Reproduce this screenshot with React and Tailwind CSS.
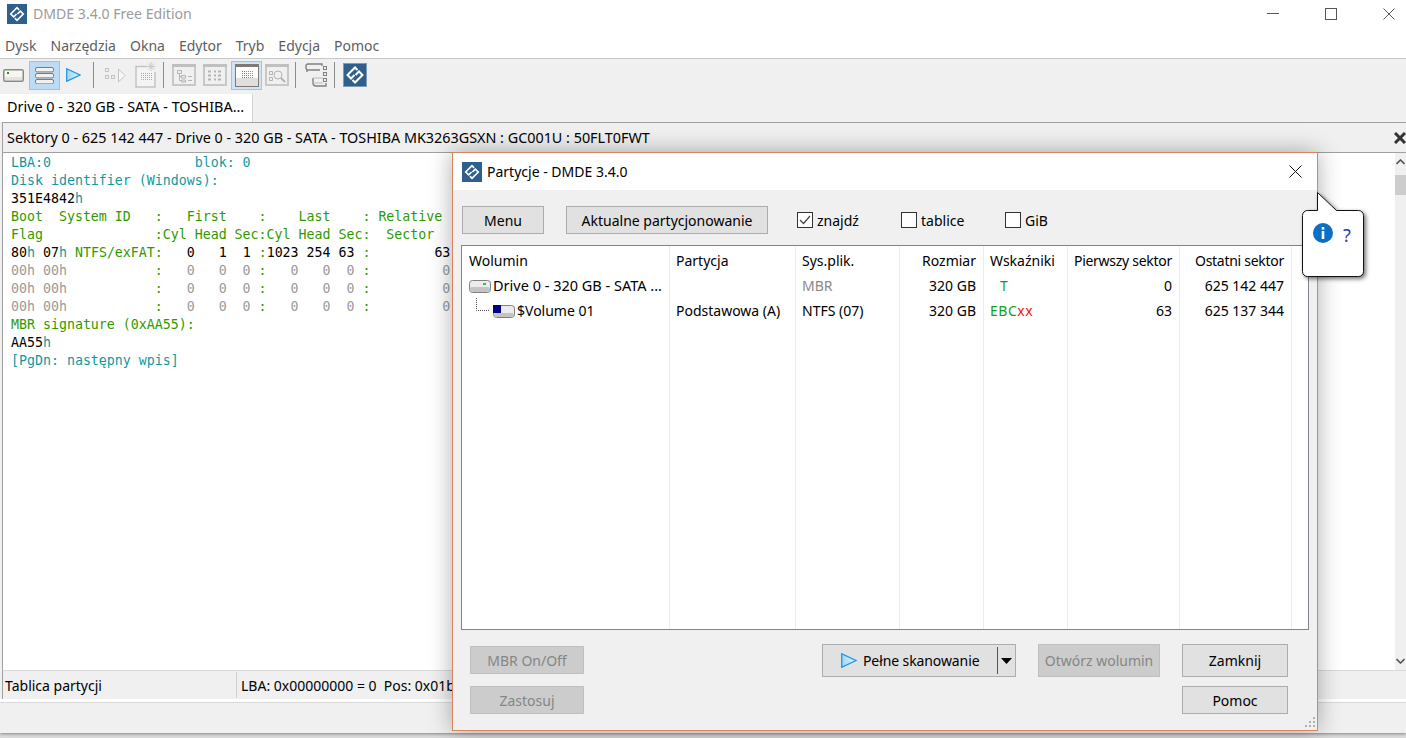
import React from "react";

const ui = "font-['Noto_Sans',sans-serif]";

function Logo({ size = 20, framed }) {
  return (
    <svg width={size} height={size} viewBox="0 0 24 24" className="shrink-0">
      <rect width="24" height="24" fill={framed ? "#7f9ab5" : "#2f5f8c"} />
      <rect x="1" y="1" width="22" height="22" fill="#2f5f8c" />
      <path d="M14.5 7 L12 4.5 L4.5 12 L8 15.5 L11.5 12" fill="none" stroke="#fff" strokeWidth="2" />
      <path d="M9.5 17 L12 19.5 L19.5 12 L16 8.5 L12.5 12" fill="none" stroke="#fff" strokeWidth="2" />
    </svg>
  );
}

function DriveIcon({ className = "" }) {
  return (
    <svg width="22" height="13" viewBox="0 0 22 13" className={className}>
      <rect x="0.5" y="0.5" width="21" height="12" rx="3" fill="#ececec" stroke="#808080" />
      <rect x="1" y="7" width="20" height="5" rx="2" fill="#c4c4c4" />
      <rect x="14" y="3" width="3" height="2" fill="#35c235" />
    </svg>
  );
}

function VolumeIcon() {
  return (
    <svg width="22" height="13" viewBox="0 0 22 13">
      <rect x="0.5" y="0.5" width="21" height="12" rx="3" fill="#ececec" stroke="#808080" />
      <rect x="1" y="8" width="20" height="4" rx="2" fill="#c4c4c4" />
      <rect x="0" y="0" width="8" height="8" fill="#000080" />
    </svg>
  );
}

function PlayIcon({ w = 15, h = 14 }) {
  return (
    <svg width={w} height={h} viewBox="0 0 15 14" className="shrink-0">
      <defs>
        <linearGradient id="playFill" x1="0" y1="0" x2="1" y2="0">
          <stop offset="0" stopColor="#9fd4f7" />
          <stop offset="1" stopColor="#e3f3fd" />
        </linearGradient>
      </defs>
      <path d="M0.7 0.7 L14 7 L0.7 13.3 Z" fill="url(#playFill)" stroke="#1a94e6" strokeWidth="1.2" />
    </svg>
  );
}

function Sep({ className = "" }) {
  return <div className={`w-px h-[26px] bg-[#8c8c8c] shrink-0 ${className}`} />;
}

function PaneIcon({ children }) {
  return (
    <svg width="24" height="22" viewBox="0 0 24 22">
      <rect x="1" y="1" width="22" height="20" fill="#f0f0f0" stroke="#c8c8c8" strokeWidth="2" />
      <rect x="0" y="0" width="24" height="3" fill="#c0c0c0" />
      {children}
    </svg>
  );
}

const gridDots = [];
for (let r = 0; r < 4; r++) for (let c = 0; c < 6; c++) gridDots.push([6 + c * 2, 6 + r * 2]);

function Toolbar() {
  return (
    <div className="h-[35px] bg-[#f0f0f0] flex items-center pl-[3px] pb-[3px] shrink-0">
      <svg width="21" height="13" viewBox="0 0 21 13">
        <rect x="0.75" y="0.75" width="19.5" height="11.5" rx="1.5" fill="#f8f6f2" stroke="#8a8a84" strokeWidth="1.5" />
        <rect x="2" y="8" width="17" height="3" fill="#e6e1da" />
        <rect x="4" y="3" width="2" height="2" fill="#1a9a1a" />
      </svg>
      <div className="ml-[5px] w-[31px] h-[29px] bg-[#bcdcf5] border border-[#90c8f3] flex items-center justify-center">
        <svg width="19" height="17" viewBox="0 0 19 17">
          {[0, 6, 12].map((y) => (
            <rect key={y} x="0.5" y={y + 0.5} width="18" height="4.4" rx="1.5" fill="#f4f1ec" stroke="#807a74" />
          ))}
        </svg>
      </div>
      <div className="ml-[6px]"><PlayIcon /></div>
      <Sep className="ml-[12px]" />
      <svg width="22" height="16" viewBox="0 0 22 16" className="ml-[10px]" fill="none" stroke="#c4c4c4">
        <rect x="1.5" y="1.5" width="3" height="3" />
        <rect x="1.5" y="8.5" width="3" height="3" />
        <rect x="7.5" y="8.5" width="3" height="3" />
        <path d="M14.5 2 L21 8.5 L14.5 15 Z" fill="#f7f7f7" />
      </svg>
      <svg width="23" height="26" viewBox="0 0 23 26" className="ml-[9px]">
        <path d="M12 4.5 H1 V25 H20 V10" fill="#f4f4f4" stroke="#c4c4c4" strokeWidth="1.5" />
        {gridDots.map(([x, y]) => <rect key={`${x}-${y}`} x={x} y={y + 5} width="1" height="1" fill="#aaa" />)}
        <path d="M16 0 v9 M11.5 4.5 h9 M13 1.5 l6 6 M19 1.5 l-6 6" stroke="#c8c8c8" />
      </svg>
      <Sep className="ml-[5px]" />
      <div className="ml-[8px]">
        <PaneIcon>
          <path d="M5.5 6.5 h4 v3 h-4 Z M9.5 11.5 h4 v2.5 h-4 Z M9.5 16 h4 v2 h-4 Z M7.5 9.5 v7 h2 M7.5 12.5 h2 M16 12.5 h4 M16 16.5 h4" fill="none" stroke="#b4b4b4" />
        </PaneIcon>
      </div>
      <div className="ml-[7px]">
        <PaneIcon>
          <path d="M5 7.5 h3 M5 11.5 h3 M5 15.5 h3 M11 7.5 h2 M15 7.5 h3 M11 11.5 h2 M15 11.5 h3 M11 15.5 h2 M15 15.5 h3" fill="none" stroke="#b4b4b4" strokeWidth="2" />
        </PaneIcon>
      </div>
      <div className="ml-[4px] w-[31px] h-[29px] bg-[#cfe5f7] border border-[#90c8f3] flex items-center justify-center">
        <svg width="24" height="23" viewBox="0 0 24 23">
          <rect x="0.5" y="0.5" width="23" height="22" fill="#fff" stroke="#807a74" />
          <rect width="24" height="3" fill="#807a74" />
          <rect x="1" y="14" width="22" height="8" fill="#e2dede" />
          {gridDots.map(([x, y]) => <rect key={`${x}-${y}`} x={x + 1} y={y + 1} width="1" height="1" fill={x > 10 ? "#8090a8" : "#4a90c0"} />)}
        </svg>
      </div>
      <div className="ml-[3px]">
        <PaneIcon>
          <path d="M4.5 7.5 h3 v3 h-3 Z M4.5 13.5 h3 v3 h-3 Z" fill="none" stroke="#b4b4b4" />
          <circle cx="13" cy="11" r="4" fill="none" stroke="#b4b4b4" />
          <path d="M16 14 L20 18" stroke="#b4b4b4" strokeWidth="2" />
        </PaneIcon>
      </div>
      <Sep className="ml-[6px]" />
      <svg width="23" height="24" viewBox="0 0 23 24" className="ml-[9px]" fill="none" stroke="#808080">
        <path d="M15 7 H3 A2 2 0 0 1 1 5 V3 A2 2 0 0 1 3 1 H17 V3" strokeWidth="1.4" />
        <path d="M2 7 V9 M8 15 V20 A3 3 0 0 0 11 23 H21 V20" strokeWidth="1.4" />
        <path d="M8 15 H18 M8 20 H18" stroke="#bbb" />
        <rect x="18.5" y="3.5" width="3" height="3" />
        <rect x="18.5" y="9.5" width="3" height="3" />
        <rect x="18.5" y="15.5" width="3" height="3" />
      </svg>
      <Sep className="ml-[6px]" />
      <div className="ml-[8px]"><Logo size={24} framed /></div>
    </div>
  );
}

const TEAL = "text-[#0f9a9f]";
const GREEN = "text-[#2f9a00]";
const BLACK = "text-black";
const GRAY = "text-[#9a9a9a]";

const dumpLines = [
  [[TEAL, "LBA:0                  blok: 0"]],
  [[TEAL, "Disk identifier (Windows):"]],
  [[BLACK, "351E4842"], [TEAL, "h"]],
  [[GREEN, "Boot  System ID   :   First    :    Last    : Relative"]],
  [[GREEN, "Flag              :Cyl Head Sec:Cyl Head Sec:  Sector"]],
  [[BLACK, "80"], [TEAL, "h "], [BLACK, "07"], [TEAL, "h "], [GREEN, "NTFS/exFAT:   "], [BLACK, "0   1  1 "], [GREEN, ":"], [BLACK, "1023 254 63 "], [GREEN, ":        "], [BLACK, "63"]],
  ...[0, 1, 2].map(() => [[GRAY, "00h 00h           "], [GREEN, ":   "], [GRAY, "0   0  0 "], [GREEN, ":   "], [GRAY, "0   0  0 "], [GREEN, ":         "], [GRAY, "0"]]),
  [[GREEN, "MBR signature (0xAA55):"]],
  [[BLACK, "AA55"], [TEAL, "h"]],
  [[TEAL, "[PgDn: następny wpis]"]],
];

function HexDump() {
  return (
    <div className="pl-2 pt-px font-['DejaVu_Sans_Mono',monospace] text-[13.28px] leading-[18px] whitespace-pre">
      {dumpLines.map((line, i) => (
        <div key={i} className="h-[18px]">
          {line.map(([color, text], j) => <span key={j} className={color}>{text}</span>)}
        </div>
      ))}
    </div>
  );
}

function Checkbox({ checked, label, className = "" }) {
  return (
    <label className={`flex items-center gap-[4px] ${className}`}>
      <span className="w-4 h-4 border border-[#333] bg-white flex items-center justify-center">
        {checked && (
          <svg width="12" height="10" viewBox="0 0 12 10" fill="none" stroke="#444" strokeWidth="1.2">
            <path d="M1 5 L4.5 8.5 L11 1" />
          </svg>
        )}
      </span>
      {label}
    </label>
  );
}

function Btn({ children, className = "", disabled }) {
  return (
    <div className={`flex items-center justify-center border shrink-0 ${disabled ? "bg-[#cccccc] border-[#bfbfbf] text-[#868686]" : "bg-[#e1e1e1] border-[#adadad] text-black"} ${className}`}>
      {children}
    </div>
  );
}

const columns = [
  { w: "w-[208px]", head: "Wolumin", cells: [], cls: "pl-[7px]" },
  { w: "w-[126px]", head: "Partycja", cells: ["", "Podstawowa (A)"], cls: "pl-[6px]" },
  { w: "w-[104px]", head: "Sys.plik.", cells: [<span key="m" className="text-[#8a8a8a]">MBR</span>, "NTFS (07)"], cls: "pl-[6px]" },
  { w: "w-[84px]", head: "Rozmiar", cells: ["320 GB", "320 GB"], cls: "pr-[7px] justify-end" },
  {
    w: "w-[84px]",
    head: "Wskaźniki",
    cells: [
      <span key="t" className="pl-[10px] text-[#14a014]">T</span>,
      <span key="e" className="tracking-[0.5px]"><span className="text-[#14a014]">EBC</span><span className="text-[#f01010]">xx</span></span>,
    ],
    cls: "pl-[6px]",
  },
  { w: "w-[112px]", head: <span className="tracking-[-0.28px]">Pierwszy sektor</span>, key: "first", cells: ["0", "63"], cls: "pr-[7px] justify-end" },
  { w: "w-[112px]", head: <span className="tracking-[-0.28px]">Ostatni sektor</span>, key: "last", cells: ["625 142 447", "625 137 344"], cls: "pr-[7px] justify-end" },
];

function PartitionList() {
  return (
    <div className="mx-[8px] h-[385px] mt-[11px] border border-[#83838d] bg-white flex shrink-0">
      {columns.map((col, i) => (
        <div key={col.key || col.head} className={`${col.w} h-full border-r border-[#e6edf5] shrink-0`}>
          <div className={`h-[27px] pt-[2px] flex items-center ${col.cls}`}>{col.head}</div>
          {i === 0 ? (
            <>
              <div className="h-[25px] flex items-center pl-[7px] whitespace-nowrap gap-[2px]">
                <DriveIcon className="mt-[1px]" />
                <span className="text-[14.5px]">Drive 0 - 320 GB - SATA ...</span>
              </div>
              <div className="h-[25px] flex items-center pl-[14px] whitespace-nowrap">
                <svg width="17" height="14" viewBox="0 0 17 14" className="-mt-[12px] shrink-0">
                  <path d="M0.5 0 V12.5 H13" fill="none" stroke="#555" strokeDasharray="1 1" />
                </svg>
                <span className="mt-[1px]"><VolumeIcon /></span>
                <span className="ml-[2px]">$Volume 01</span>
              </div>
            </>
          ) : (
            col.cells.map((c, j) => (
              <div key={j} className={`h-[25px] flex items-center whitespace-nowrap ${col.cls}`}>{c}</div>
            ))
          )}
        </div>
      ))}
    </div>
  );
}

function PartitionsDialog() {
  return (
    <div className="absolute left-[452px] top-[152px] w-[866px] h-[579px] border border-[#d9835f] bg-[#f0f0f0] shadow-[0_0_22px_rgba(0,0,0,0.32)] flex flex-col text-[14px] text-black">
      <div className="h-[37px] bg-white flex items-center pl-[9px] pr-[15px] shrink-0">
        <Logo />
        <span className="ml-[5px]">Partycje - DMDE 3.4.0</span>
        <svg width="13" height="13" viewBox="0 0 13 13" className="ml-auto" stroke="#111" fill="none">
          <path d="M0.5 0.5 L12.5 12.5 M12.5 0.5 L0.5 12.5" />
        </svg>
      </div>
      <div className="flex items-center pl-[9px] mt-[16px] shrink-0">
        <Btn className="w-[82px] h-[28px]">Menu</Btn>
        <Btn className="w-[202px] h-[28px] ml-[22px]">Aktualne partycjonowanie</Btn>
        <Checkbox checked label="znajdź" className="ml-[29px] w-[104px]" />
        <Checkbox label="tablice" className="w-[104px]" />
        <Checkbox label="GiB" />
      </div>
      <PartitionList />
      <div className="flex pl-[17px] mt-[14px] relative grow">
        <div className="flex flex-col gap-[12px] pt-[2px] w-[114px]">
          <Btn disabled className="w-[114px] h-[28px]">MBR On/Off</Btn>
          <Btn disabled className="w-[114px] h-[28px]">Zastosuj</Btn>
        </div>
        <Btn className="w-[194px] h-[33px] ml-[238px] !justify-start pl-[18px]">
          <PlayIcon w={16} h={15} />
          <span className="ml-[6px] tracking-[-0.1px]">Pełne skanowanie</span>
          <span className="ml-auto w-px h-[27px] bg-[#555]" />
          <svg width="11" height="6" viewBox="0 0 11 6" className="mx-[3px]"><path d="M0 0 H11 L5.5 6 Z" fill="#000" /></svg>
        </Btn>
        <Btn disabled className="w-[122px] h-[33px] ml-[22px]">Otwórz wolumin</Btn>
        <div className="flex flex-col gap-[9px] ml-[22px]">
          <Btn className="w-[106px] h-[33px]">Zamknij</Btn>
          <Btn className="w-[106px] h-[28px]">Pomoc</Btn>
        </div>
        <svg width="12" height="12" viewBox="0 0 12 12" className="absolute right-[1px] bottom-[1px]" fill="#b0b0b0">
          <rect x="9" y="0" width="2" height="2" />
          <rect x="5" y="4" width="2" height="2" /><rect x="9" y="4" width="2" height="2" />
          <rect x="1" y="8" width="2" height="2" /><rect x="5" y="8" width="2" height="2" /><rect x="9" y="8" width="2" height="2" />
        </svg>
      </div>
    </div>
  );
}

function HelpBubble() {
  return (
    <div className="absolute left-[1300px] top-[191px] w-[70px] h-[92px]">
      <svg width="70" height="92" viewBox="0 0 70 92" className="drop-shadow-[2px_2px_2px_rgba(0,0,0,0.55)]">
        <path d="M17.5 1.5 L36.5 19.5 H58.5 A5 5 0 0 1 63.5 24.5 V80.5 A5 5 0 0 1 58.5 85.5 H7.5 A5 5 0 0 1 2.5 80.5 V24.5 A5 5 0 0 1 7.5 19.5 H17.5 Z" fill="#fff" stroke="#111" />
        <circle cx="23" cy="42" r="10" fill="#0b6fc4" />
        <rect x="21.7" y="40" width="2.6" height="8" fill="#fff" />
        <rect x="21.7" y="36" width="2.6" height="2.6" fill="#fff" />
      </svg>
      <span className="absolute left-[43px] top-[32px] text-[18px] leading-[24px] text-[#2a3db0]">?</span>
    </div>
  );
}

export default function App() {
  return (
    <div className={`${ui} relative w-[1406px] h-[738px] overflow-hidden bg-[#dcdcdc] text-[14px] text-black`}>
      <div className="h-[733px] flex flex-col bg-[#f0f0f0] shadow-[0_1px_3px_rgba(0,0,0,0.4)] relative">
        <div className="h-[31px] bg-white flex items-center pl-[7px] pr-[11px] pb-[3px] shrink-0">
          <Logo />
          <span className="ml-[6px] text-[#9b9b9b] text-[14.1px]">DMDE 3.4.0 Free Edition</span>
          <div className="ml-auto flex items-center gap-[46px]">
            <svg width="12" height="12" viewBox="0 0 12 12" stroke="#555"><path d="M0 5.5 H12" /></svg>
            <svg width="12" height="12" viewBox="0 0 12 12" stroke="#555" fill="none"><rect x="0.5" y="0.5" width="11" height="11" /></svg>
            <svg width="12" height="12" viewBox="0 0 12 12" stroke="#555" fill="none"><path d="M0.5 0.5 L11.5 11.5 M11.5 0.5 L0.5 11.5" /></svg>
          </div>
        </div>
        <div className="h-[28px] bg-white border-b border-[#c8c8c8] flex items-center pl-[5px] pt-[2px] gap-[14px] text-[#5e5e5e] shrink-0">
          {["Dysk", "Narzędzia", "Okna", "Edytor", "Tryb", "Edycja", "Pomoc"].map((m) => <span key={m}>{m}</span>)}
        </div>
        <Toolbar />
        <div className="h-[28px] shrink-0 flex">
          <div className="w-[253px] bg-white border-r border-[#d4d4d4] pl-[7px] pb-[2px] flex items-center whitespace-nowrap text-[14.42px]">Drive 0 - 320 GB - SATA - TOSHIBA...</div>
        </div>
        <div className="ml-[2px] border-l border-t border-[#a0a0a0] h-[30px] flex items-center pl-[4px] shrink-0">
          <span className="whitespace-nowrap text-[14.36px]">Sektory 0 - 625 142 447 - Drive 0 - 320 GB - SATA - TOSHIBA MK3263GSXN : GC001U : 50FLT0FWT</span>
          <svg width="12" height="12" viewBox="0 0 12 12" className="ml-auto" stroke="#333" strokeWidth="3"><path d="M1 1 L11 11 M11 1 L1 11" /></svg>
        </div>
        <div className="ml-[2px] border-l border-t border-[#a0a0a0] h-[518px] bg-white flex shrink-0">
          <div className="grow"><HexDump /></div>
          <div className="w-[11px] bg-[#f0f0f0] flex flex-col items-center shrink-0">
            <svg width="9" height="6" viewBox="0 0 9 6" className="mt-[6px]" fill="none" stroke="#555" strokeWidth="1.6"><path d="M0.5 5 L4.5 1 L8.5 5" /></svg>
            <div className="w-full h-[20px] mt-[10px] bg-[#cdcdcd]" />
            <svg width="9" height="6" viewBox="0 0 9 6" className="mt-auto mb-[6px]" fill="none" stroke="#555" strokeWidth="1.6"><path d="M0.5 1 L4.5 5 L8.5 1" /></svg>
          </div>
        </div>
        <div className="ml-[2px] border-l border-t border-[#a0a0a0] border-t-[#d9d9d9] h-[29px] flex items-center shrink-0">
          <div className="w-[234px] h-[26px] border-r border-[#d0d0d0] pl-[2px] flex items-center">Tablica partycji</div>
          <div className="pl-[4px] whitespace-pre">LBA: 0x00000000 = 0  Pos: 0x01be</div>
        </div>
        <div className="h-[4px] bg-white border-b border-[#d9d9d9] shrink-0" />
        <div className="grow" />
      </div>
      <PartitionsDialog />
      <HelpBubble />
    </div>
  );
}
